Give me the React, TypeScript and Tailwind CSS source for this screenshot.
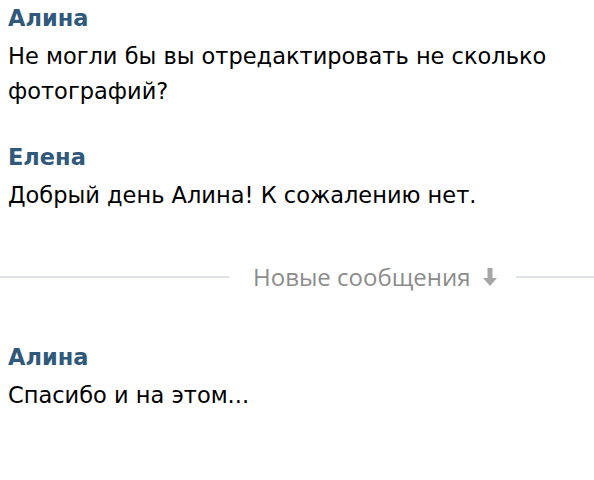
import React from "react";

function Msg({ name, children }: { name: string; children: React.ReactNode }) {
  return (
    <div className="flex flex-col">
      <div className="font-bold text-[#30597b] text-[22.5px] leading-[35px]">{name}</div>
      <div className="mt-[3px] text-black text-[22.5px] leading-[35px]">{children}</div>
    </div>
  );
}

export default function App() {
  return (
    <div className="w-[594px] h-[480px] bg-white overflow-hidden pt-[1px]" style={{ fontFamily: '"DejaVu Sans", sans-serif' }}>
      <div className="px-2 flex flex-col gap-[31px]">
        <Msg name="Алина">Не могли бы вы отредактировать не сколько фотографий?</Msg>
        <Msg name="Елена">Добрый день Алина! К сожалению нет.</Msg>
      </div>
      <div className="flex items-center mt-[49px] h-[30px]">
        <div className="w-[229px] h-[2px] bg-[#dfe3e7]" />
        <div
          className="ml-[24px] text-[24px] text-[#8c8c8c] leading-[30px]"
          style={{ fontFamily: '"Open Sans", sans-serif' }}
        >
          Новые сообщения
        </div>
        <svg className="ml-[13px] shrink-0" width="14" height="18" viewBox="0 0 14 18">
          <path d="M4.5 0h5v10h4.5l-7 8-7-8h4.5z" fill="#a6a6a6" />
        </svg>
        <div className="flex-1 ml-[19px] h-[2px] bg-[#dfe3e7]" />
      </div>
      <div className="px-2 mt-[48px]">
        <Msg name="Алина">Спасибо и на этом...</Msg>
      </div>
    </div>
  );
}
